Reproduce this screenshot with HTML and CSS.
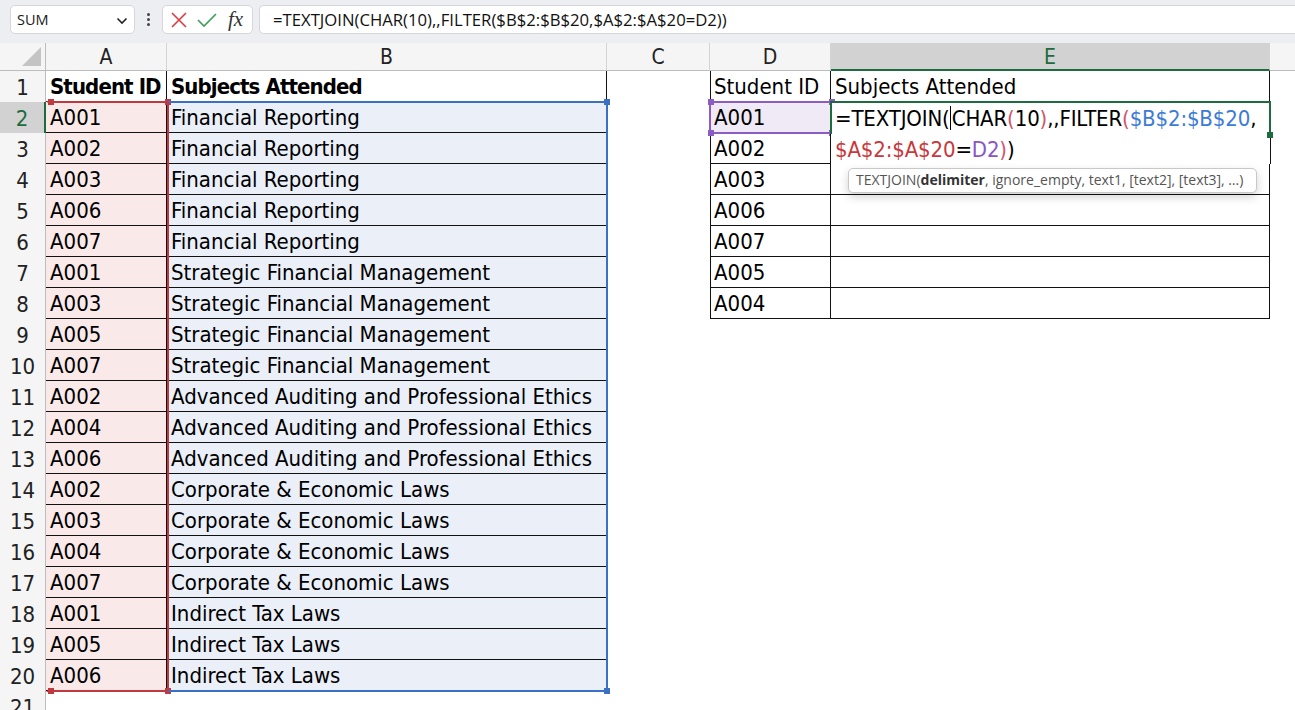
FILE: index.html
```html
<!DOCTYPE html>
<html>
<head>
<meta charset="utf-8">
<link rel="stylesheet" href="styles.css">
</head>
<body>
<div class="toolbar">
  <div class="namebox"><span class="nb-text">SUM</span>
    <svg class="chev" width="12" height="8" viewBox="0 0 12 8"><path d="M1.5 1.5 L6 6 L10.5 1.5" fill="none" stroke="#222" stroke-width="1.6"/></svg>
  </div>
  <div class="dots"><i></i><i></i><i></i></div>
  <div class="btnbox">
    <svg width="18" height="18" viewBox="0 0 18 18"><path d="M2 2 L16 16 M16 2 L2 16" stroke="#e0393e" stroke-width="1.6" fill="none"/></svg>
    <svg width="22" height="18" viewBox="0 0 22 18"><path d="M2 9 L8 15 L20 3" stroke="#3c9f5a" stroke-width="1.6" fill="none"/></svg>
    <span class="fx">fx</span>
  </div>
  <div class="fbar">=TEXTJOIN(CHAR(10),,FILTER($B$2:$B$20,$A$2:$A$20=D2))</div>
</div>
<div class="band"></div>
<div class="sheet">
  <div class="ch corner"><span class="tri"></span></div>
  <div class="ch">A</div><div class="ch">B</div><div class="ch">C</div><div class="ch">D</div><div class="ch sel">E</div><div class="ch last"></div>

  <div class="rh">1</div><div class="c b hd">Student ID</div><div class="c b hd">Subjects Attended</div><div class="c"></div><div class="c b bl">Student ID</div><div class="c b">Subjects Attended</div><div class="c"></div>
  <div class="rh sel">2</div><div class="c b ra">A001</div><div class="c b rb">Financial Reporting</div><div class="c"></div><div class="c b bl rd">A001</div><div class="c b"></div><div class="c"></div>
  <div class="rh">3</div><div class="c b ra">A002</div><div class="c b rb">Financial Reporting</div><div class="c"></div><div class="c b bl">A002</div><div class="c b"></div><div class="c"></div>
  <div class="rh">4</div><div class="c b ra">A003</div><div class="c b rb">Financial Reporting</div><div class="c"></div><div class="c b bl">A003</div><div class="c b"></div><div class="c"></div>
  <div class="rh">5</div><div class="c b ra">A006</div><div class="c b rb">Financial Reporting</div><div class="c"></div><div class="c b bl">A006</div><div class="c b"></div><div class="c"></div>
  <div class="rh">6</div><div class="c b ra">A007</div><div class="c b rb">Financial Reporting</div><div class="c"></div><div class="c b bl">A007</div><div class="c b"></div><div class="c"></div>
  <div class="rh">7</div><div class="c b ra">A001</div><div class="c b rb">Strategic Financial Management</div><div class="c"></div><div class="c b bl">A005</div><div class="c b"></div><div class="c"></div>
  <div class="rh">8</div><div class="c b ra">A003</div><div class="c b rb">Strategic Financial Management</div><div class="c"></div><div class="c b bl">A004</div><div class="c b"></div><div class="c"></div>
  <div class="rh">9</div><div class="c b ra">A005</div><div class="c b rb">Strategic Financial Management</div><div class="c"></div><div class="c"></div><div class="c"></div><div class="c"></div>
  <div class="rh">10</div><div class="c b ra">A007</div><div class="c b rb">Strategic Financial Management</div><div class="c"></div><div class="c"></div><div class="c"></div><div class="c"></div>
  <div class="rh">11</div><div class="c b ra">A002</div><div class="c b rb">Advanced Auditing and Professional Ethics</div><div class="c"></div><div class="c"></div><div class="c"></div><div class="c"></div>
  <div class="rh">12</div><div class="c b ra">A004</div><div class="c b rb">Advanced Auditing and Professional Ethics</div><div class="c"></div><div class="c"></div><div class="c"></div><div class="c"></div>
  <div class="rh">13</div><div class="c b ra">A006</div><div class="c b rb">Advanced Auditing and Professional Ethics</div><div class="c"></div><div class="c"></div><div class="c"></div><div class="c"></div>
  <div class="rh">14</div><div class="c b ra">A002</div><div class="c b rb">Corporate &amp; Economic Laws</div><div class="c"></div><div class="c"></div><div class="c"></div><div class="c"></div>
  <div class="rh">15</div><div class="c b ra">A003</div><div class="c b rb">Corporate &amp; Economic Laws</div><div class="c"></div><div class="c"></div><div class="c"></div><div class="c"></div>
  <div class="rh">16</div><div class="c b ra">A004</div><div class="c b rb">Corporate &amp; Economic Laws</div><div class="c"></div><div class="c"></div><div class="c"></div><div class="c"></div>
  <div class="rh">17</div><div class="c b ra">A007</div><div class="c b rb">Corporate &amp; Economic Laws</div><div class="c"></div><div class="c"></div><div class="c"></div><div class="c"></div>
  <div class="rh">18</div><div class="c b ra">A001</div><div class="c b rb">Indirect Tax Laws</div><div class="c"></div><div class="c"></div><div class="c"></div><div class="c"></div>
  <div class="rh">19</div><div class="c b ra">A005</div><div class="c b rb">Indirect Tax Laws</div><div class="c"></div><div class="c"></div><div class="c"></div><div class="c"></div>
  <div class="rh">20</div><div class="c b ra">A006</div><div class="c b rb">Indirect Tax Laws</div><div class="c"></div><div class="c"></div><div class="c"></div><div class="c"></div>
  <div class="rh">21</div><div class="c"></div><div class="c"></div><div class="c"></div><div class="c"></div><div class="c"></div><div class="c"></div>

  <div class="hl red"><i class="h tl"></i><i class="h tr"></i><i class="h bl2"></i><i class="h br"></i></div>
  <div class="hl blue"><i class="h tl"></i><i class="h tr"></i><i class="h bl2"></i><i class="h br"></i></div>
  <div class="hl purple"><i class="h tl"></i><i class="h tr"></i><i class="h bl2"></i><i class="h br"></i></div>
  <div class="edit">
    <div class="editbox"><i class="fill"></i></div>
    <div class="etext">=TEXTJOIN(<span class="caret"></span>CHAR<span class="pp">(</span>10<span class="pp">)</span>,,FILTER<span class="pp">(</span><span class="cb">$B$2:$B$20</span>,<br><span class="cr">$A$2:$A$20</span>=<span class="cp">D2</span><span class="pp">)</span>)</div>
  </div>
  <div class="tip">TEXTJOIN(<b>delimiter</b>, ignore_empty, text1, [text2], [text3], …)</div>
</div>
</body>
</html>
```

FILE: styles.css
```css
* { box-sizing: border-box; }
html, body { margin: 0; padding: 0; background: #fff; overflow: hidden; }
body { width: 1295px; height: 710px; font-family: "DejaVu Sans Condensed", "DejaVu Sans", sans-serif; }

.toolbar {
  height: 35px;
  background: #eceef1;
  display: flex;
  align-items: flex-start;
  padding: 5px 0 0 10px;
  font-family: "Open Sans", "Noto Sans", sans-serif;
}
.namebox {
  width: 125px; height: 29px;
  background: #fff;
  border: 1px solid #d5d7da;
  border-radius: 5px;
  display: flex; align-items: center; justify-content: space-between;
  padding: 0 6px 0 6px;
  font-size: 14.5px; color: #1a1a1a;
}
.chev { margin-top: 2px; }
.dots { width: 27px; height: 29px; display: flex; flex-direction: column; align-items: center; justify-content: center; gap: 2px; }
.dots i { display: block; width: 3px; height: 3px; background: #444; border-radius: 50%; }
.btnbox {
  width: 91px; height: 29px;
  background: #fff;
  border: 1px solid #d5d7da;
  border-radius: 5px;
  display: flex; align-items: center; gap: 8px;
  padding-left: 7px;
}
.fx { font-family: "Liberation Serif", serif; font-style: italic; font-size: 21px; color: #333; margin-left: 2px; line-height: 1; }
.fbar {
  flex: 1;
  margin-left: 6px;
  height: 29px;
  background: #fff;
  border: 1px solid #d5d7da;
  border-right: none;
  border-radius: 5px 0 0 5px;
  padding-left: 13px;
  font-size: 16.7px; line-height: 27px; color: #111;
  white-space: nowrap;
}
.band { height: 8px; background: #eceef1; }

.sheet {
  position: relative;
  display: grid;
  grid-template-columns: 46px 121px 440px 103px 121px 439px 25px;
  grid-template-rows: 28px repeat(21, 31px);
  font-size: 22px;
  color: #000;
}
.ch {
  background: #f5f5f5;
  border-right: 1px solid #d4d4d4;
  border-bottom: 1px solid #bdbdbd;
  text-align: center;
  font-size: 21px;
  line-height: 28px;
  color: #222;
}
.ch.corner { position: relative; border-right: 1px solid #bdbdbd; }
.tri {
  position: absolute; right: 4px; bottom: 4px;
  width: 0; height: 0;
  border-left: 19px solid transparent;
  border-bottom: 19px solid #c4c4c4;
}
.ch.sel { background: #d2d2d2; color: #1d6b3e; border-bottom: 2px solid #1d6b3e; }
.ch.last { border-right: none; }
.rh {
  background: #f5f5f5;
  border-right: 1px solid #bdbdbd;
  text-align: center;
  font-size: 22px;
  line-height: 33px;
  color: #222;
  overflow: hidden;
}
.rh.sel { background: #d2d2d2; color: #1d6b3e; border-right: 2px solid #1d6b3e; }
.c {
  line-height: 32px;
  padding-left: 4px;
  white-space: nowrap;
  overflow: hidden;
}
.c.b { border-right: 1px solid #111; border-bottom: 1px solid #111; }
.c.bl { border-left: 1px solid #111; padding-left: 3px; }
.c.hd { font-weight: bold; letter-spacing: -0.9px; }
.c.ra { background: #fae9e9; }
.c.rb { background: #eaeff8; }
.c.rd { background: #efeaf6; }

.hl { position: absolute; border: 2px solid; pointer-events: none; }
.hl.red { left: 46px; top: 58px; width: 123px; height: 591px; border-color: #c0393f; border-left-color: transparent; }
.hl.blue { left: 167px; top: 58px; width: 441px; height: 591px; border-color: #3a70c6; border-left-color: transparent; }
.hl.purple { left: 709px; top: 58px; width: 124px; height: 33px; border-color: #8b5cc4; }
.h { position: absolute; width: 6px; height: 6px; }
.hl.red .h { background: #c0393f; }
.hl.blue .h { background: #3a70c6; }
.hl.purple .h { background: #8b5cc4; }
.h.tl { left: -3px; top: -4px; }
.h.tr { right: -4px; top: -4px; }
.h.bl2 { left: -3px; bottom: -4px; }
.h.br { right: -4px; bottom: -4px; }
.hl.red .h.tl, .hl.red .h.bl2 { left: 0; }
.hl.blue .h.tl, .hl.blue .h.bl2 { display: none; }

.edit { position: absolute; left: 830px; top: 58px; width: 441px; height: 63px; background: #fff; }
.editbox { position: absolute; left: 0; top: 0; width: 441px; height: 33px; border: 2px solid #1d6b3e; border-bottom: none; }
.edit::after { content: ""; position: absolute; left: 0; top: 33px; width: 1px; height: 30px; background: #111; }
.edit::before { content: ""; position: absolute; right: 0; top: 33px; width: 1px; height: 30px; background: #111; }
.fill { position: absolute; right: -4px; bottom: -4px; width: 6px; height: 6px; background: #1d6b3e; }
.etext {
  position: absolute; left: 5px; top: 2px;
  font-size: 22px; line-height: 31px; white-space: nowrap; color: #000;
  letter-spacing: -0.15px;
}
.caret { display: inline-block; width: 1px; height: 24px; background: #000; vertical-align: -4px; margin: 0 1px 0 0; }
.pp { color: #d0566a; }
.cb { color: #3c7bd6; }
.cr { color: #c8383c; }
.cp { color: #8a55c8; }

.tip {
  position: absolute; left: 848px; top: 125px; width: 409px; height: 25px;
  background: #fff;
  border: 1px solid #c8c8c8;
  border-radius: 5px;
  box-shadow: 0 4px 10px rgba(0,0,0,0.18);
  font-family: "Open Sans", "Noto Sans", sans-serif;
  font-size: 14px; line-height: 22px; color: #555;
  padding-left: 7px;
  white-space: nowrap;
}
.tip b { color: #333; }
```
